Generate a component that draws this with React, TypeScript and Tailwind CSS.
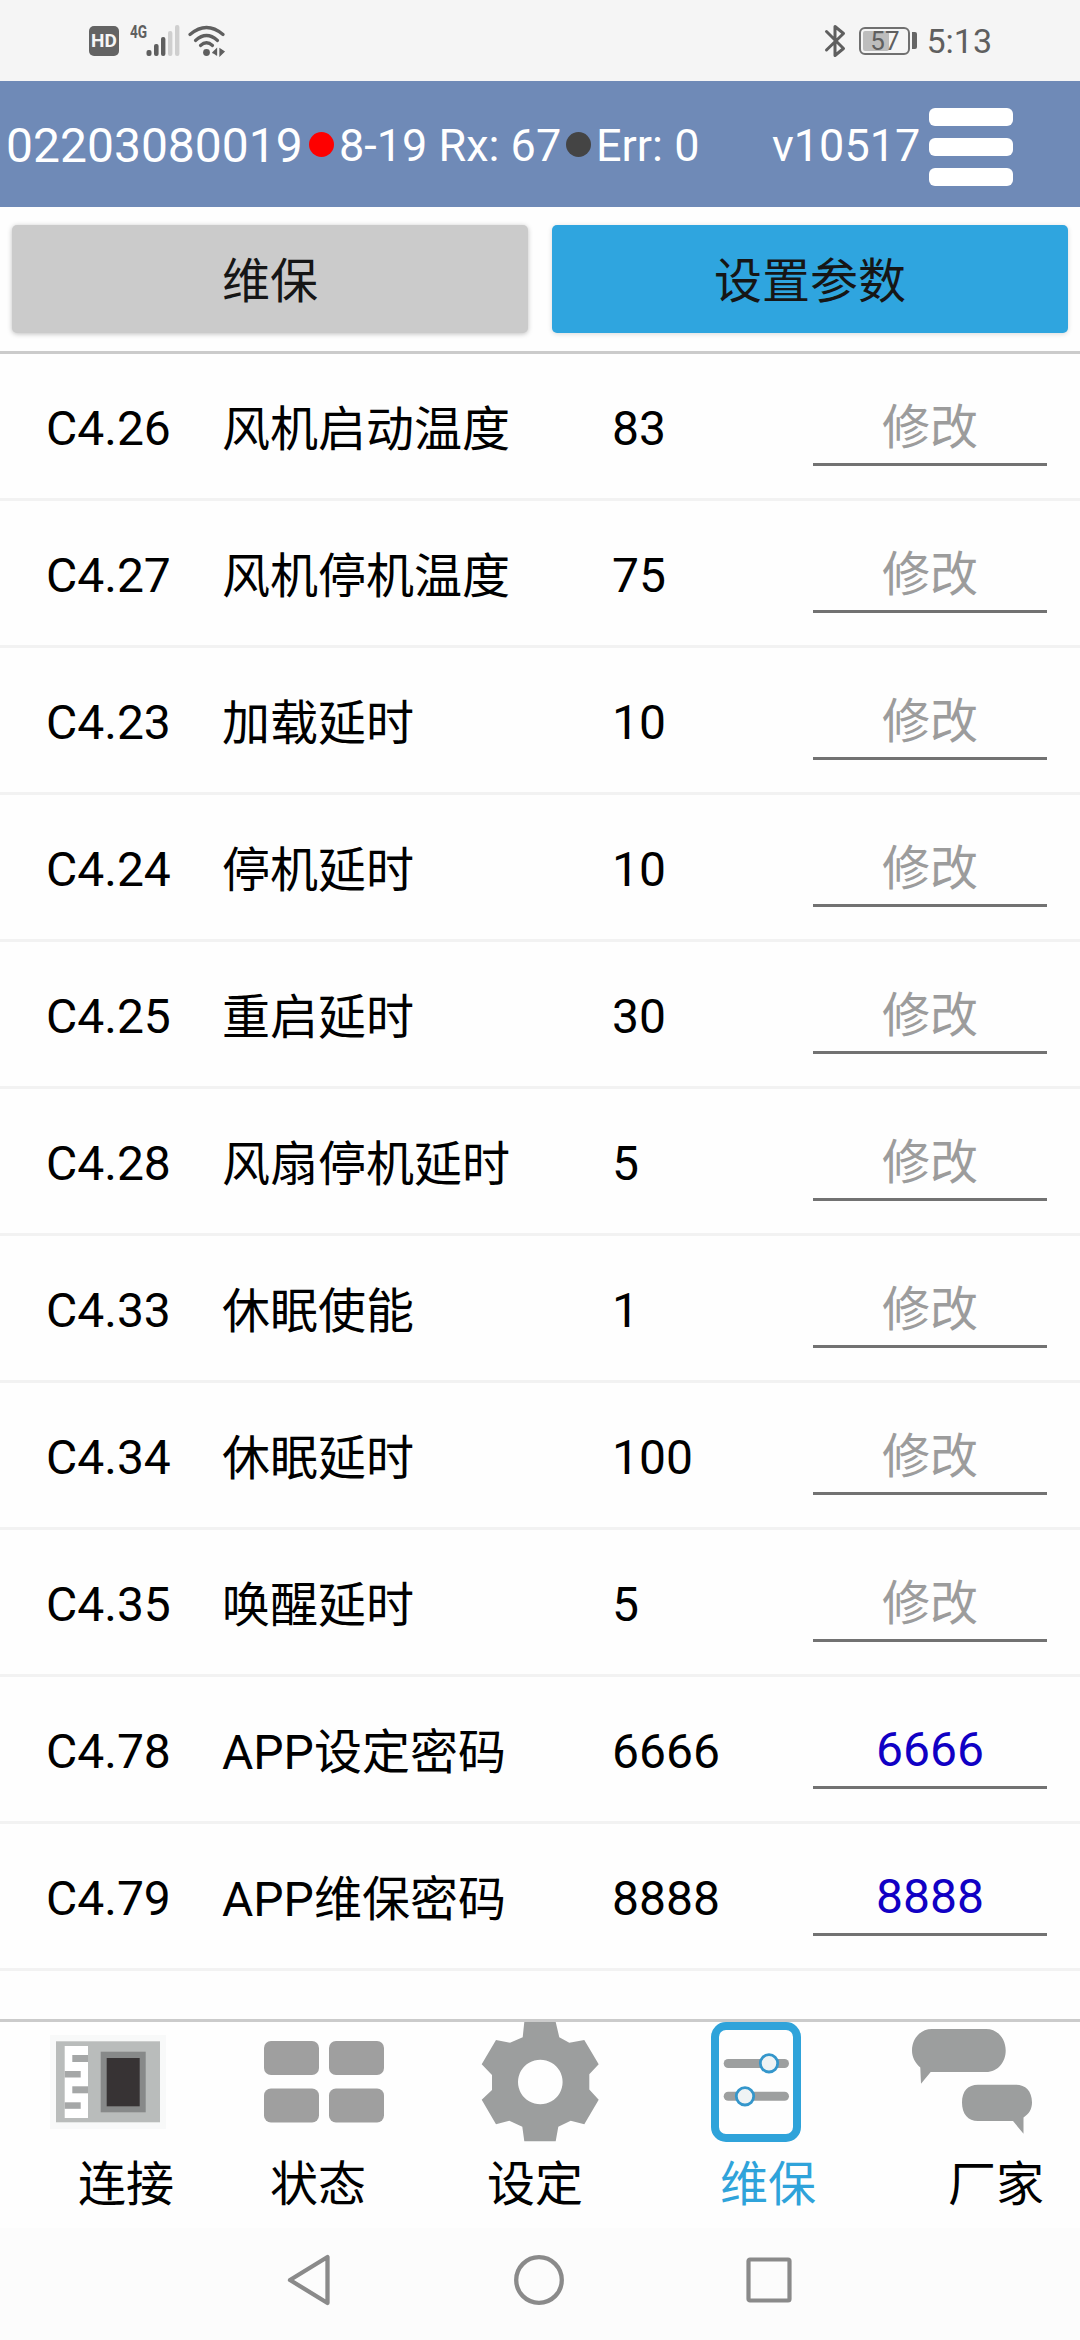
import type { ReactNode } from 'react';
import clsx from 'clsx';

interface Param {
  code: string;
  name: string;
  value: string;
  input?: string;
}

const params: Param[] = [
  { code: 'C4.26', name: '风机启动温度', value: '83' },
  { code: 'C4.27', name: '风机停机温度', value: '75' },
  { code: 'C4.23', name: '加载延时', value: '10' },
  { code: 'C4.24', name: '停机延时', value: '10' },
  { code: 'C4.25', name: '重启延时', value: '30' },
  { code: 'C4.28', name: '风扇停机延时', value: '5' },
  { code: 'C4.33', name: '休眠使能', value: '1' },
  { code: 'C4.34', name: '休眠延时', value: '100' },
  { code: 'C4.35', name: '唤醒延时', value: '5' },
  { code: 'C4.78', name: 'APP设定密码', value: '6666', input: '6666' },
  { code: 'C4.79', name: 'APP维保密码', value: '8888', input: '8888' },
];

function StatusBar() {
  return (
    <div className="flex h-[81px] shrink-0 items-center justify-between bg-[#f5f5f5] pl-[89px] pr-[88px] text-[#5f5f5f]">
      <div className="flex items-center">
        <span className="flex h-[30px] w-[30px] items-center justify-center rounded-[5px] bg-[#636363] text-[19px] leading-none font-bold text-[#f5f5f5]">
          HD
        </span>
        <span className="mb-[18px] ml-[11px] w-[18px] origin-left scale-x-[0.72] text-[19px] leading-[14px] font-bold">4G</span>
        <svg width="34" height="32" viewBox="0 0 34 32" className="-ml-[2px]">
          <rect x="0.5" y="25" width="5" height="6" rx="2" fill="#5f5f5f" />
          <rect x="8" y="19" width="4.6" height="12" rx="2" fill="#5f5f5f" />
          <rect x="15" y="12" width="4.4" height="19" rx="2" fill="#5f5f5f" />
          <rect x="22" y="6" width="4.4" height="25" rx="2" fill="#cfcfcf" />
          <rect x="29" y="0" width="4.4" height="31" rx="2" fill="#cfcfcf" />
        </svg>
        <svg width="40" height="32" viewBox="0 0 40 32" className="ml-[8px]" fill="none" stroke="#5f5f5f" strokeWidth="3.2" strokeLinecap="round">
          <path d="M2 9.5 Q18.500 -4.500 35 9.500" />
          <path d="M7.500 15.500 Q18.500 5.500 29.500 15.500" />
          <path d="M12.500 20.500 Q18.500 15 24.500 20.500" />
          <circle cx="18.500" cy="27.500" r="3.400" fill="#5f5f5f" stroke="none" />
          <path d="M24.500 28 L28.500 24 V30.500 M32 24 V30.500 L36 26.500 Z" strokeWidth="1.300" fill="#5f5f5f" strokeLinecap="butt" />
        </svg>
      </div>
      <div className="flex items-center">
        <svg width="22" height="34" viewBox="0 0 22 34" fill="none" stroke="#5f5f5f" strokeWidth="3" strokeLinejoin="round" strokeLinecap="round">
          <path d="M2.500 7.500 L19.500 24.500 L11 31.500 V2.500 L19.500 9.500 L2.500 26" />
        </svg>
        <span className="relative ml-[13px] flex h-[28px] w-[51px] items-center justify-center rounded-[6px] border-2 border-[#707070] text-[26px] leading-none">
          <span className="absolute top-[2px] bottom-[2px] left-[2px] w-[26px] rounded-[2px] bg-[#bdbdbd]" />
          <span className="relative">57</span>
        </span>
        <span className="mr-[9px] ml-[2px] h-[17px] w-[5px] rounded-r-[2px] bg-[#666]" />
        <span className="text-[34px] leading-none">5:13</span>
      </div>
    </div>
  );
}

function Header() {
  return (
    <header className="flex h-[126px] shrink-0 items-center bg-[#6f8ab7] pl-[6px] text-[45px] leading-none text-white">
      <span className="w-[303px] pt-[3px] text-[48px] whitespace-nowrap">02203080019</span>
      <span className="h-[25px] w-[25px] rounded-full bg-[#fe0000]" />
      <span className="w-[226px] pt-[2px] pl-[5px] whitespace-nowrap">8-19 Rx: 67</span>
      <span className="ml-[6px] h-[25px] w-[25px] rounded-full bg-[#444]" />
      <span className="w-[181px] pt-[2px] pl-[5px] whitespace-nowrap">Err: 0</span>
      <span className="w-[157px] pt-[2px] whitespace-nowrap">v10517</span>
      <div className="mt-[5px] flex w-[84px] flex-col gap-[12px]">
        <span className="h-[18px] rounded-[6px] bg-white" />
        <span className="h-[18px] rounded-[6px] bg-white" />
        <span className="h-[18px] rounded-[6px] bg-white" />
      </div>
    </header>
  );
}

function ParamRow({ code, name, value, input }: Param) {
  return (
    <div className="flex h-[147px] border-b-[3px] border-[#f2f2f2] pl-[46px] text-[48px] leading-[56px] text-black">
      <div className="w-[176px] pt-[47px]">{code}</div>
      <div className="w-[390px] pt-[48px]">{name}</div>
      <div className="w-[201px] pt-[47px]">{value}</div>
      <div
        className={clsx(
          'h-[112px] w-[234px] border-b-[3px] border-[#727272] text-center',
          input ? 'pt-[45px] text-[#1000c4]' : 'pt-[46px] text-[#9c9c9c]',
        )}
      >
        {input ?? '修改'}
      </div>
    </div>
  );
}

function TabIcon({ children }: { children: ReactNode }) {
  return (
    <svg width="120" height="120" viewBox="0 0 120 120" className="shrink-0">
      {children}
    </svg>
  );
}

function BottomTabs() {
  return (
    <nav className="grid h-[209px] shrink-0 grid-cols-5 border-t-[3px] border-[#cbcbcb] text-[48px] leading-[60px] text-black">
      <div className="flex flex-col items-center">
        <TabIcon>
          <rect x="2" y="13" width="116" height="94" fill="#f8f9f9" />
          <rect x="8" y="19.300" width="104" height="81" fill="#b9bcbb" />
          <rect x="16.700" y="24" width="23.300" height="72" fill="#fff" />
          <rect x="24.300" y="33" width="15.700" height="7" fill="#a5a7a7" />
          <rect x="16.700" y="49" width="16" height="6.500" fill="#a5a7a7" />
          <rect x="24.300" y="64.300" width="15.700" height="7" fill="#a5a7a7" />
          <rect x="16.700" y="80.300" width="16" height="6.500" fill="#a5a7a7" />
          <rect x="52.700" y="29.700" width="45" height="60.600" fill="#878989" />
          <rect x="58.700" y="36" width="33" height="48.300" fill="#373334" />
        </TabIcon>
        <span className="mt-[13px] pl-[36px]">连接</span>
      </div>
      <div className="flex flex-col items-center">
        <TabIcon>
          <g fill="#9f9f9f">
            <rect x="0" y="19" width="55" height="34" rx="7" />
            <rect x="65" y="19" width="55" height="34" rx="7" />
            <rect x="0" y="66.500" width="55" height="34" rx="7" />
            <rect x="65" y="66.500" width="55" height="34" rx="7" />
          </g>
        </TabIcon>
        <span className="mt-[13px] pr-[12px]">状态</span>
      </div>
      <div className="flex flex-col items-center">
        <TabIcon>
          <path
            fill="#9c9e9e"
            fillRule="evenodd"
            d="M44.300 0 H75.700 L79.300 15.300 L89.300 20.700 L104.300 18 L118.700 42.300 L109.300 52.300 V67.500 L118.700 77.700 L104.300 102.300 L90.700 98.700 L78.300 104.700 L75.700 119.300 H44.300 L42.300 104.700 L29.300 98.700 L16 102.300 L1.700 77.700 L12 68 V53 L1.700 42.300 L16 18 L30 20.700 L42.700 15.300 Z M60.300 37.700 a22.300 22.300 0 1 0 0.010 0 Z"
          />
        </TabIcon>
        <span className="mt-[13px] pr-[10px]">设定</span>
      </div>
      <div className="flex flex-col items-center text-[#2fa3da]">
        <TabIcon>
          <rect x="19" y="4" width="82" height="112" rx="11" fill="#fefefe" stroke="#2fa3da" strokeWidth="8" />
          <rect x="27.700" y="37" width="65.300" height="9" rx="4.500" fill="#9d9f9f" />
          <rect x="27.700" y="69.700" width="65.300" height="9" rx="4.500" fill="#9d9f9f" />
          <circle cx="73" cy="41.300" r="8.700" fill="#eff3f4" stroke="#3496cb" strokeWidth="2.800" />
          <circle cx="49" cy="74.300" r="8.700" fill="#eff3f4" stroke="#3496cb" strokeWidth="2.800" />
        </TabIcon>
        <span className="mt-[13px] pl-[24px]">维保</span>
      </div>
      <div className="flex flex-col items-center">
        <TabIcon>
          <g fill="#9c9e9e">
            <path d="M20 7 H74 C86 7 93.700 17 93.700 28.500 C93.700 40 86 50 74 50 H18.700 L9 61.700 L8.300 45.500 C3 41 0 35 0 28.500 C0 17 8 7 20 7 Z" />
            <path d="M66 62.700 H104 C113.500 62.700 120 69 120 80.500 C120 87 117 92 111.500 95.500 V111.700 L101 99 H66 C56 99 50 92 50 80.500 C50 69 56 62.700 66 62.700 Z" />
          </g>
        </TabIcon>
        <span className="mt-[13px] pl-[48px]">厂家</span>
      </div>
    </nav>
  );
}

function SystemNav() {
  return (
    <div className="flex h-[112px] shrink-0 items-center justify-between bg-[#fcfcfc] pr-[287px] pb-[8px] pl-[286px]">
      <svg width="46" height="54" viewBox="0 0 46 54" fill="none" stroke="#8a8a8a" strokeWidth="4.300" strokeLinejoin="round">
        <path d="M41.500 4 V50 L4 27 Z" />
      </svg>
      <svg width="52" height="52" viewBox="0 0 52 52" fill="none" stroke="#8a8a8a" strokeWidth="4.300">
        <circle cx="26" cy="26" r="22.800" />
      </svg>
      <svg width="48" height="48" viewBox="0 0 48 48" fill="none" stroke="#8a8a8a" strokeWidth="4.200">
        <rect x="3.500" y="3.500" width="41" height="41" rx="1.500" />
      </svg>
    </div>
  );
}

export default function App() {
  return (
    <div className="flex h-[2340px] w-[1080px] flex-col overflow-hidden bg-[#fefefe] font-[Roboto,'Noto_Sans_CJK_SC',sans-serif]">
      <StatusBar />
      <Header />

      {/* Page switch */}
      <div className="flex h-[147px] shrink-0 gap-[24px] border-b-[3px] border-[#cbcbcb] px-[12px] pt-[18px] text-[48px] text-[#161616]">
        <button className="h-[108px] flex-1 rounded-[5px] bg-[#cbcbcb] pt-[6px] shadow-[0_1px_5px_rgba(0,0,0,0.25)]">维保</button>
        <button className="h-[108px] flex-1 rounded-[5px] bg-[#2fa5df] pt-[6px] shadow-[0_1px_5px_rgba(0,0,0,0.15)]">设置参数</button>
      </div>

      <main className="flex-1">
        {params.map((param) => (
          <ParamRow key={param.code} {...param} />
        ))}
      </main>

      <BottomTabs />
      <SystemNav />
    </div>
  );
}
